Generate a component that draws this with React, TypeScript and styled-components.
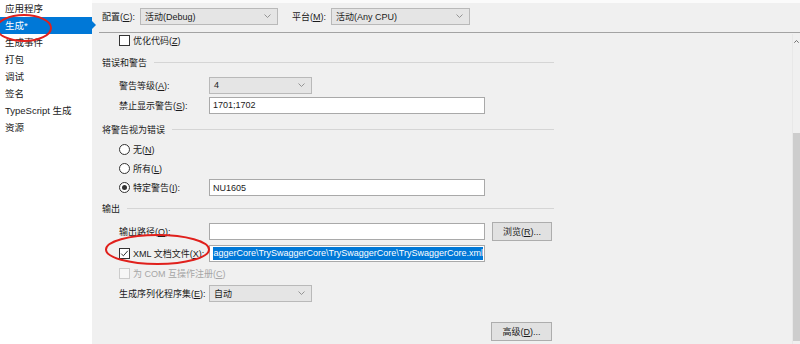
import React from "react";
import styled, { createGlobalStyle } from "styled-components";

const GlobalStyle = createGlobalStyle`
  html, body { margin: 0; padding: 0; background: #f0f0f0; }
  body {
    font-family: "Liberation Sans", "Noto Sans CJK SC", sans-serif;
    font-size: 9px;
    color: #1b1b1b;
  }
  * { box-sizing: border-box; }
`;

const Window = styled.div`
  position: relative;
  width: 800px;
  height: 344px;
  overflow: hidden;
  display: flex;
  background: #f0f0f0;
`;

const Sidebar = styled.nav`
  width: 92px;
  flex: none;
  background: #ffffff;
  display: flex;
  flex-direction: column;
`;

const NavItem = styled.div<{ $active?: boolean }>`
  position: relative;
  height: 17px;
  line-height: 17px;
  padding-left: 5px;
  font-size: 9.5px;
  white-space: nowrap;
  background: ${(p) => (p.$active ? "#0078d7" : "transparent")};
  color: ${(p) => (p.$active ? "#ffffff" : "#1b1b1b")};
  ${(p) =>
    p.$active &&
    `&::after {
      content: "";
      position: absolute;
      right: -4px;
      top: 4px;
      border-left: 4px solid #0078d7;
      border-top: 4.5px solid transparent;
      border-bottom: 4.5px solid transparent;
    }`}
`;

const Main = styled.main`
  flex: 1;
  min-width: 0;
  display: flex;
  flex-direction: column;
`;

const TopStrip = styled.div`
  height: 3px;
  background: #fbfbfb;
`;

const TopBar = styled.div`
  height: 29px;
  padding: 0 0 3px 10px;
  display: flex;
  align-items: center;
`;

const TopField = styled.div`
  display: flex;
  align-items: center;
  gap: 5px;
  margin-right: 14px;
`;

const Divider = styled.div`
  height: 1px;
  margin-left: 7px;
  background: #a3a3a3;
`;

const ScrollArea = styled.div`
  flex: 1;
  display: flex;
  min-height: 0;
`;

const Content = styled.div`
  flex: 1;
  padding-left: 10px;
  display: flex;
  flex-direction: column;
`;

const Column = styled.div`
  width: 452px;
  display: flex;
  flex-direction: column;
`;

const Row = styled.div<{ $h: number; $indent?: number; $end?: boolean }>`
  height: ${(p) => p.$h}px;
  flex: none;
  display: flex;
  align-items: center;
  padding-left: ${(p) => p.$indent ?? 17}px;
  justify-content: ${(p) => (p.$end ? "flex-end" : "flex-start")};
  white-space: nowrap;
`;

const SectionTitle = styled.span`
  flex: none;
`;

const SectionLine = styled.div`
  flex: 1;
  height: 1px;
  margin-left: 7px;
  background: #d5d5d5;
`;

const Label = styled.div`
  width: 90px;
  flex: none;
  display: flex;
  align-items: center;
  gap: 3px;
`;

const Combo = styled.div<{ $w: number }>`
  width: ${(p) => p.$w}px;
  height: 17px;
  flex: none;
  display: flex;
  align-items: center;
  justify-content: space-between;
  padding: 0 6px 0 4px;
  background: #e5e5e5;
  border: 1px solid #b9b9b9;
`;

const TextBox = styled.div<{ $selected?: boolean }>`
  width: 276px;
  height: 17px;
  flex: none;
  display: flex;
  align-items: center;
  justify-content: ${(p) => (p.$selected ? "flex-end" : "flex-start")};
  overflow: hidden;
  padding: ${(p) => (p.$selected ? "0 1px" : "0 3px")};
  background: #ffffff;
  border: 1px solid #a9a9a9;
`;

const Selection = styled.span`
  flex: none;
  background: #0078d7;
  color: #ffffff;
  line-height: 13px;
`;

const Button = styled.div<{ $w: number; $ml?: number; $mr?: number }>`
  width: ${(p) => p.$w}px;
  height: 19px;
  flex: none;
  margin-left: ${(p) => p.$ml ?? 0}px;
  margin-right: ${(p) => p.$mr ?? 0}px;
  display: flex;
  align-items: center;
  justify-content: center;
  background: #e1e1e1;
  border: 1px solid #adadad;
`;

const Box = styled.span<{ $disabled?: boolean }>`
  width: 11px;
  height: 11px;
  flex: none;
  display: inline-flex;
  align-items: center;
  justify-content: center;
  background: ${(p) => (p.$disabled ? "#f7f7f7" : "#ffffff")};
  border: 1px solid ${(p) => (p.$disabled ? "#cccccc" : "#333333")};
`;

const Radio = styled.span<{ $on?: boolean }>`
  width: 11px;
  height: 11px;
  flex: none;
  border-radius: 50%;
  border: 1px solid #333333;
  background: #ffffff;
  display: inline-flex;
  align-items: center;
  justify-content: center;
  &::after {
    content: "";
    width: 5px;
    height: 5px;
    border-radius: 50%;
    background: ${(p) => (p.$on ? "#333333" : "transparent")};
  }
`;

const Option = styled.div<{ $disabled?: boolean }>`
  display: flex;
  align-items: center;
  gap: 3px;
  color: ${(p) => (p.$disabled ? "#a6a6a6" : "inherit")};
`;

const Scrollbar = styled.div`
  width: 8px;
  flex: none;
  margin-top: 1px;
  display: flex;
  flex-direction: column;
  background: #f0f0f0;
  border-left: 1px solid #e8e8e8;
`;

const ScrollArrow = styled.div`
  height: 14px;
  flex: none;
  display: flex;
  align-items: center;
  justify-content: center;
`;

const Track = styled.div`
  flex: 1;
  padding-top: 85px;
`;

const Thumb = styled.div`
  height: 208px;
  background: #cdcdcd;
`;

const Overlay = styled.svg`
  position: absolute;
  left: 0;
  top: 0;
  pointer-events: none;
`;

const Chevron = () => (
  <svg width="7" height="4" viewBox="0 0 7 4">
    <polyline points="0.5,0.5 3.5,3.5 6.5,0.5" fill="none" stroke="#8a8a8a" strokeWidth="0.9" />
  </svg>
);

const Check = () => (
  <svg width="9" height="9" viewBox="0 0 9 9">
    <polyline points="1.2,4.6 3.4,6.8 7.8,1.8" fill="none" stroke="#333" strokeWidth="1" />
  </svg>
);

const navItems = ["应用程序", "生成*", "生成事件", "打包", "调试", "签名", "TypeScript 生成", "资源"];

export default function App() {
  return (
    <>
      <GlobalStyle />
      <Window>
        <Sidebar>
          {navItems.map((n) => (
            <NavItem key={n} $active={n === "生成*"}>
              {n}
            </NavItem>
          ))}
        </Sidebar>
        <Main>
          <TopStrip />
          <TopBar>
            <TopField>
              <span>
                配置(<u>C</u>):
              </span>
              <Combo $w={138}>
                <span>活动(Debug)</span>
                <Chevron />
              </Combo>
            </TopField>
            <TopField>
              <span>
                平台(<u>M</u>):
              </span>
              <Combo $w={139}>
                <span>活动(Any CPU)</span>
                <Chevron />
              </Combo>
            </TopField>
          </TopBar>
          <Divider />
          <ScrollArea>
            <Content>
              <Column>
                <Row $h={14}>
                  <Option>
                    <Box />
                    <span>
                      优化代码(<u>Z</u>)
                    </span>
                  </Option>
                </Row>
                <Row $h={30} $indent={0}>
                  <SectionTitle>错误和警告</SectionTitle>
                  <SectionLine />
                </Row>
                <Row $h={16}>
                  <Label>
                    <span>
                      警告等级(<u>A</u>):
                    </span>
                  </Label>
                  <Combo $w={103}>
                    <span>4</span>
                    <Chevron />
                  </Combo>
                </Row>
                <Row $h={24}>
                  <Label>
                    <span>
                      禁止显示警告(<u>S</u>):
                    </span>
                  </Label>
                  <TextBox>1701;1702</TextBox>
                </Row>
                <Row $h={24} $indent={0}>
                  <SectionTitle>将警告视为错误</SectionTitle>
                  <SectionLine />
                </Row>
                <Row $h={16}>
                  <Option>
                    <Radio />
                    <span>
                      无(<u>N</u>)
                    </span>
                  </Option>
                </Row>
                <Row $h={22}>
                  <Option>
                    <Radio />
                    <span>
                      所有(<u>L</u>)
                    </span>
                  </Option>
                </Row>
                <Row $h={17}>
                  <Label>
                    <Radio $on />
                    <span>
                      特定警告(<u>I</u>):
                    </span>
                  </Label>
                  <TextBox>NU1605</TextBox>
                </Row>
                <Row $h={24} $indent={0}>
                  <SectionTitle>输出</SectionTitle>
                  <SectionLine />
                </Row>
                <Row $h={22}>
                  <Label>
                    <span>
                      输出路径(<u>O</u>):
                    </span>
                  </Label>
                  <TextBox />
                  <Button $w={60} $ml={7}>
                    <span>
                      浏览(<u>R</u>)...
                    </span>
                  </Button>
                </Row>
                <Row $h={22}>
                  <Label>
                    <Box>
                      <Check />
                    </Box>
                    <span>
                      XML 文档文件(<u>X</u>):
                    </span>
                  </Label>
                  <TextBox $selected>
                    <Selection>aggerCore\TrySwaggerCore\TrySwaggerCore\TrySwaggerCore.xml</Selection>
                  </TextBox>
                </Row>
                <Row $h={18}>
                  <Option $disabled>
                    <Box $disabled />
                    <span>
                      为 COM 互操作注册(<u>C</u>)
                    </span>
                  </Option>
                </Row>
                <Row $h={22}>
                  <Label>
                    <span>
                      生成序列化程序集(<u>E</u>):
                    </span>
                  </Label>
                  <Combo $w={103}>
                    <span>自动</span>
                    <Chevron />
                  </Combo>
                </Row>
                <Row $h={54} $end>
                  <Button $w={61} $mr={2}>
                    <span>
                      高级(<u>D</u>)...
                    </span>
                  </Button>
                </Row>
              </Column>
            </Content>
            <Scrollbar>
              <ScrollArrow>
                <svg width="5" height="3" viewBox="0 0 5 3">
                  <polyline points="0.3,2.7 2.5,0.5 4.7,2.7" fill="none" stroke="#606060" strokeWidth="0.9" />
                </svg>
              </ScrollArrow>
              <Track>
                <Thumb />
              </Track>
            </Scrollbar>
          </ScrollArea>
        </Main>
        <Overlay width="800" height="344" viewBox="0 0 800 344">
          <ellipse cx="24" cy="28" rx="27" ry="13" fill="none" stroke="#e0201c" strokeWidth="2" />
          <ellipse cx="157.5" cy="249.5" rx="51.5" ry="14.5" fill="none" stroke="#e0201c" strokeWidth="2" />
        </Overlay>
      </Window>
    </>
  );
}
